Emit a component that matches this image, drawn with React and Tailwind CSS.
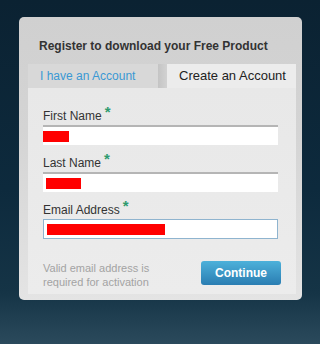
import React from "react";

function Field({ label, redWidth, redLeft, focused }) {
  return (
    <div className="flex flex-col">
      <div className="flex items-start h-[14px] text-[12px] leading-[14px] text-[#333]">
        <span>{label}</span>
        <span className="ml-[3px] -mt-[4px] text-[15px] font-bold leading-[14px] text-[#2f9b6f]">*</span>
      </div>
      <div
        className={
          focused
            ? "mt-[2px] h-[20px] w-[235px] bg-white border border-[#8fb4cf] flex items-center"
            : "mt-[2px] h-[20px] w-[235px] bg-white border-t-2 border-t-[#b5b5b5] flex items-center"
        }
      >
        <div
          className="h-[11px] bg-[#ff0000]"
          style={{ width: redWidth, marginLeft: redLeft }}
        />
      </div>
    </div>
  );
}

export default function App() {
  return (
    <div
      className="w-[320px] h-[344px] pt-[17px] pl-[19px] bg-[linear-gradient(180deg,#0b2232_0%,#0d2a3d_55%,#153446_85%,#2b4a5c_100%)]"
      style={{ fontFamily: '"Liberation Sans", Arial, sans-serif' }}
    >
      <div className="w-[283px] h-[283px] rounded-[5px] bg-[linear-gradient(180deg,#d0d0d0_0%,#d4d4d4_40%,#e4e4e4_100%)] flex flex-col pl-[9px] pr-[6px]">
        {/* Header */}
        <h1 className="pt-[22px] pl-[11px] text-[12px] leading-[14px] font-bold text-[#333]">
          Register to download your Free Product
        </h1>

        {/* Tabs */}
        <div className="mt-[11px] flex h-[24px]">
          <div className="w-[130px] bg-[#d8d8d8] pl-[12px] flex items-center text-[12px] text-[#3a98d4]">
            I have an Account
          </div>
          <div className="w-[9px] bg-[linear-gradient(90deg,#c4c4c4,#d2d2d2)]" />
          <div className="flex-1 bg-[#ececec] pl-[12px] flex items-center text-[13px] text-[#222]">
            Create an Account
          </div>
        </div>

        {/* Panel */}
        <div className="h-[206px] bg-[linear-gradient(180deg,#e8e8e8,#ececec)] pl-[15px] pt-[21px] flex flex-col">
          <div className="flex flex-col gap-[11px]">
            <Field label="First Name" redWidth={26} redLeft={0} />
            <Field label="Last Name" redWidth={35} redLeft={3} />
            <Field label="Email Address" redWidth={118} redLeft={3} focused />
          </div>

          <div className="mt-[21px] flex items-start justify-between pr-[15px]">
            <p className="mt-[1px] text-[11px] leading-[14px] text-[#a3a3a3]">
              Valid email address is
              <br />
              required for activation
            </p>
            <button className="mt-[1px] w-[80px] h-[24px] rounded-[3px] bg-[linear-gradient(180deg,#4db1da,#2a7db2)] text-white text-[12px] font-bold">
              Continue
            </button>
          </div>
        </div>
      </div>
    </div>
  );
}
